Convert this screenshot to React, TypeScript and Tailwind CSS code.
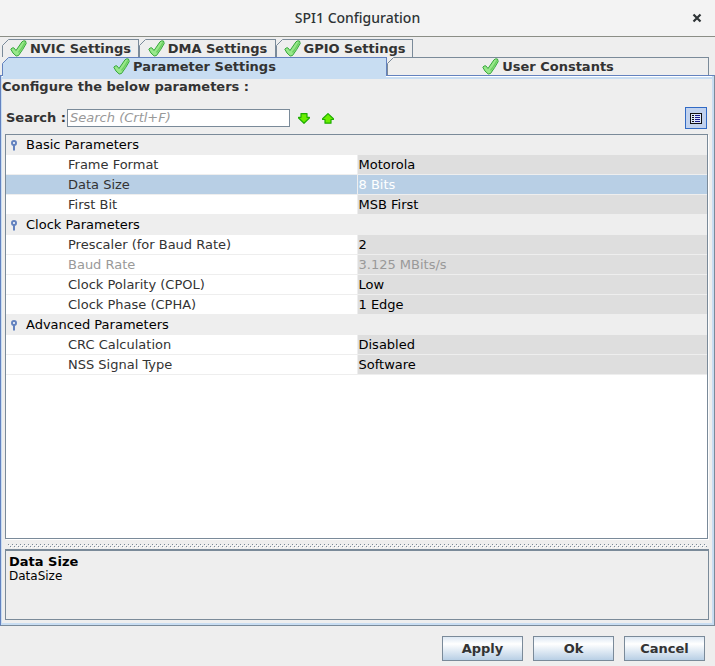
import { useState } from "react";

type Parameter = { name: string; value: string; disabled?: boolean };

const groups: { title: string; params: Parameter[] }[] = [
  {
    title: "Basic Parameters",
    params: [
      { name: "Frame Format", value: "Motorola" },
      { name: "Data Size", value: "8 Bits" },
      { name: "First Bit", value: "MSB First" },
    ],
  },
  {
    title: "Clock Parameters",
    params: [
      { name: "Prescaler (for Baud Rate)", value: "2" },
      { name: "Baud Rate", value: "3.125 MBits/s", disabled: true },
      { name: "Clock Polarity (CPOL)", value: "Low" },
      { name: "Clock Phase (CPHA)", value: "1 Edge" },
    ],
  },
  {
    title: "Advanced Parameters",
    params: [
      { name: "CRC Calculation", value: "Disabled" },
      { name: "NSS Signal Type", value: "Software" },
    ],
  },
];

const CheckIcon = () => (
  <svg width="17" height="17" viewBox="0 0 17 17" aria-hidden="true" className="shrink-0">
    <path
      d="M.8 9.200Q2 7.500 3.800 7.800L6 10.500 12 1.800Q13.500 .3 15.500 1L16.200 3.500Q13 9.500 8.500 15.500L6.200 16Q2.500 13.500 .8 9.200Z"
      fill="#98e88a"
      stroke="#35a63a"
      strokeLinejoin="round"
    />
    <path d="M15 2.500Q12 8.500 8.500 12.500" fill="none" stroke="#6ccf62" strokeWidth="1.500" />
  </svg>
);

const ArrowIcon = ({ up = false }: { up?: boolean }) => (
  <svg width="12" height="11" viewBox="0 0 12 11" aria-hidden="true">
    <path
      d={up ? "M6 .6 11.400 5.800V6.500H9V10.200H3V6.500H.6V5.800Z" : "M3 .6H9V4.300H11.400V5L6 10.300 .6 5V4.300H3Z"}
      fill="#6aee00"
      stroke="#1fae00"
      strokeWidth="1.200"
      strokeLinejoin="round"
    />
  </svg>
);

const PinIcon = () => (
  <svg width="6" height="11" viewBox="0 0 6 11" aria-hidden="true" className="mt-px">
    <circle cx="3" cy="3" r="2" fill="#fff" stroke="#6382bf" strokeWidth="2" />
    <path d="M3 5V10.500" stroke="#6382bf" strokeWidth="2" />
  </svg>
);

const ListIcon = () => (
  <svg width="12" height="11" viewBox="0 0 12 11" shapeRendering="crispEdges" aria-hidden="true">
    <path d="M.5 .5H11.500V10.500H.5Z" fill="#dce6fa" stroke="#111" />
    <path d="M2 2.500H4M2 4.500H4M2 6.500H4M2 8.500H4" stroke="#111" />
    <path d="M5 2.500H10M5 4.500H10M5 6.500H10M5 8.500H10" stroke="#1a1a8c" />
  </svg>
);

// Bevelled top left corner of a tab
const Corner = ({ color }: { color: string }) => (
  <svg width="7" height="7" viewBox="0 0 7 7" aria-hidden="true" className="absolute -top-px -left-px">
    <path d="M0 0H7L0 7Z" fill="#eee" />
    <path d="M.5 6.500 6.500 .5" stroke={color} />
  </svg>
);

type TabProps = { label: string; selected: boolean; className: string; onClick: () => void };

const Tab = ({ label, selected, className, onClick }: TabProps) => (
  <button
    type="button"
    role="tab"
    aria-selected={selected}
    onClick={onClick}
    className={`relative flex items-center justify-center gap-[3px] border border-b-0 leading-4 ${
      selected ? "border-[#6382bf] bg-[#c8ddf2]" : "border-[#7a8a99] bg-[#eee]"
    } ${className}`}
  >
    <Corner color={selected ? "#6382bf" : "#7a8a99"} />
    <CheckIcon />
    {label}
    {/* Joins the selected tab to the panel below */}
    {selected && <span className="absolute inset-x-0 top-full h-1 bg-[#c8ddf2]" />}
  </button>
);

const App = () => {
  const [tab, setTab] = useState("Parameter Settings");
  const [selected, setSelected] = useState("Data Size");
  const [search, setSearch] = useState("");

  return (
    <div className="flex min-h-screen flex-col bg-[#eee] font-['DejaVu_Sans',sans-serif] text-[13px] text-[#333]">
      <header className="relative flex h-[37px] items-center justify-center border-b border-[#8b8e86] bg-[#f3f3f3]">
        <h1 className="font-['Noto_Sans',sans-serif] text-sm font-medium text-[#2e3436]">SPI1 Configuration</h1>
        <button type="button" aria-label="Close" className="absolute top-3 right-3 p-px text-[#2e3436]">
          <svg width="10" height="10" viewBox="0 0 10 10" aria-hidden="true">
            <path d="M1.500 1.500 8.500 8.500M8.500 1.500 1.500 8.500" stroke="currentColor" strokeWidth="2.200" />
          </svg>
        </button>
      </header>

      <div role="tablist" className="relative pt-0.5 pr-1.5 pl-0.5 font-bold">
        <div className="flex">
          {["NVIC Settings", "DMA Settings", "GPIO Settings"].map((label) => (
            <Tab
              key={label}
              label={label}
              selected={tab === label}
              onClick={() => setTab(label)}
              className="h-[18px] w-[137px]"
            />
          ))}
        </div>
        <div className="grid grid-cols-[385fr_322fr]">
          {["Parameter Settings", "User Constants"].map((label) => (
            <Tab
              key={label}
              label={label}
              selected={tab === label}
              onClick={() => setTab(label)}
              className="h-[18px]"
            />
          ))}
        </div>
      </div>

      <main className="flex flex-1 flex-col border border-[#7a8a99] border-t-[#6382bf] border-l-[#6382bf]">
        <div className="flex flex-1 flex-col border-r-2 border-b-2 border-l border-[#c8ddf2] pr-[3px] pb-[3px]">
          <div className="-mr-[3px] h-[3px] border-t border-white bg-[#c8ddf2]" />
          <p className="leading-4 font-bold">Configure the below parameters :</p>
          <div className="mt-3 mr-0.5 mb-[5px] flex items-center pl-1">
            <label htmlFor="search" className="font-bold">
              Search :
            </label>
            <input
              id="search"
              type="text"
              value={search}
              onChange={(e) => setSearch(e.target.value)}
              placeholder="Search (Crtl+F)"
              className="ml-px h-[18px] w-[223px] border border-[#7a8a99] bg-white px-0.5 placeholder:text-[#999] placeholder:italic"
            />
            <button type="button" aria-label="Find next" className="ml-2">
              <ArrowIcon />
            </button>
            <button type="button" aria-label="Find previous" className="ml-3">
              <ArrowIcon up />
            </button>
            <button
              type="button"
              aria-label="Show descriptions"
              className="ml-auto flex size-[22px] items-center justify-center border border-[#316ac5] bg-[#c1d2ee]"
            >
              <ListIcon />
            </button>
          </div>

          <div className="mr-px ml-[3px] flex-1 border border-[#7a8a99] bg-white shadow-[1px_1px_0_#fff]">
            <table className="w-full table-fixed border-separate border-spacing-0 text-left">
              {groups.map((group) => (
                <tbody key={group.title}>
                  <tr className="h-5 bg-[#eee] text-black">
                    <th colSpan={2} className="p-0 pl-[5px] leading-5 font-normal">
                      <span className="flex items-center gap-[9px]">
                        <PinIcon />
                        {group.title}
                      </span>
                    </th>
                  </tr>
                  {group.params.map((param) => {
                    const active = param.name === selected;
                    return (
                      <tr
                        key={param.name}
                        onClick={() => setSelected(param.name)}
                        className={`h-5 ${active ? "bg-[#b8cfe5]" : ""}`}
                      >
                        <td
                          className={`border-b border-[#eee] p-0 pl-[62px] leading-[19px] ${param.disabled ? "text-[#999]" : ""}`}
                        >
                          {param.name}
                        </td>
                        <td
                          className={`border-b border-l border-[#eee] p-0 pl-px leading-[19px] ${
                            active ? "text-white" : param.disabled ? "bg-[#dedede] text-[#999]" : "bg-[#dedede] text-black"
                          }`}
                        >
                          {param.value}
                        </td>
                      </tr>
                    );
                  })}
                </tbody>
              ))}
            </table>
          </div>

          <div className="mt-[5px] mr-0.5 mb-px ml-1.5">
            <svg width="100%" height="4" className="block" aria-hidden="true" shapeRendering="crispEdges">
              <pattern id="grip" width="4" height="4" patternUnits="userSpaceOnUse">
                <path d="M0 0H1V1H0ZM2 2H3V3H2Z" fill="#7a8a99" />
                <path d="M1 1H2V2H1ZM3 3H4V4H3Z" fill="#fff" />
              </pattern>
              <rect width="100%" height="4" fill="url(#grip)" />
            </svg>
          </div>

          <section className="ml-[3px] h-[71px] border border-t-2 border-[#7a8a99] px-[3px] pt-[3px] leading-[15px] text-black">
            <h2 className="font-bold">{selected}</h2>
            <p className="text-xs leading-[15px]">{selected.replace(/ /g, "")}</p>
          </section>
        </div>
      </main>

      <footer className="flex justify-end gap-2.5 pt-2.5 pr-2.5 pb-[5px]">
        {["Apply", "Ok", "Cancel"].map((label) => (
          <button
            key={label}
            type="button"
            className="h-[25px] w-[81px] border border-[#7a8a99] bg-linear-to-b from-[#dde8f3] via-white via-30% to-[#b8cfe5] font-bold"
          >
            {label}
          </button>
        ))}
      </footer>
    </div>
  );
};

export default App;
